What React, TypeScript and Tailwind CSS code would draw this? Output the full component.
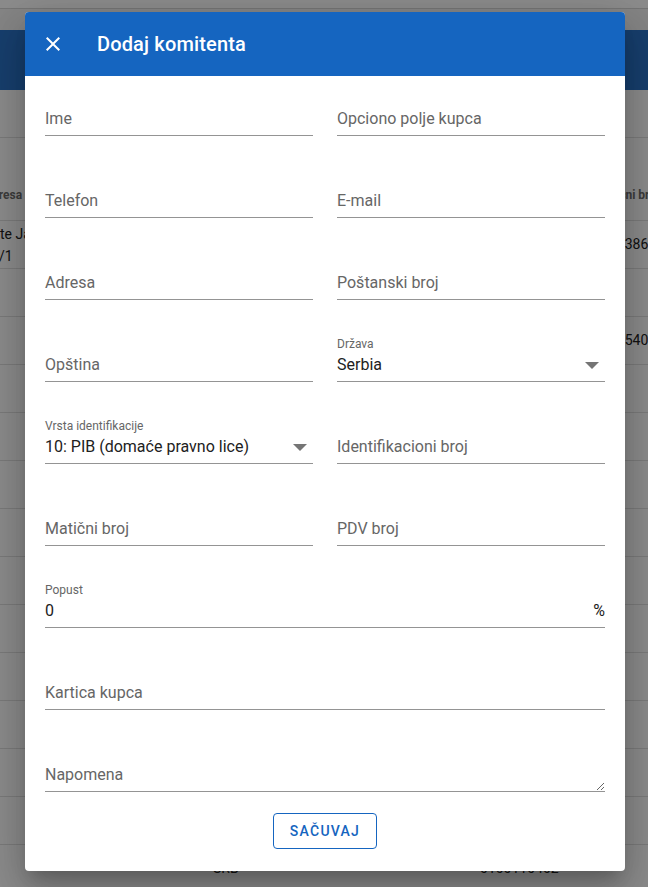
import React from "react";

type FieldProps = {
  label: string;
  value?: string;
  full?: boolean;
  select?: boolean;
  suffix?: string;
  textarea?: boolean;
};

function ArrowDrop() {
  return (
    <svg viewBox="0 0 14 7" className="w-[14px] h-[7px] shrink-0 self-start mt-[10px] mr-[6px] fill-[#757575]">
      <path d="M0 0h14L7 7z" />
    </svg>
  );
}

function Field({ label, value, full, select, suffix, textarea }: FieldProps) {
  const hasValue = value !== undefined;
  return (
    <div className={`flex flex-col h-[48px] ${full ? "col-span-2" : ""}`}>
      <div className="h-[18px] pt-[2px] text-[12px] leading-[16px] text-[#666] whitespace-nowrap">
        {hasValue ? label : ""}
      </div>
      <div className="h-[30px] flex border-b border-[#949494]">
        {textarea ? (
          <textarea
            rows={1}
            placeholder={label}
            className="block w-full h-[29px] p-0 pt-[1px] text-[16px] leading-[23px] text-[#212121] bg-transparent outline-none resize-y overflow-hidden placeholder:text-[#666] placeholder:opacity-100"
          />
        ) : (
          <>
            <div
              className={`flex-1 pt-[1px] text-[16px] leading-[23px] whitespace-nowrap ${
                hasValue ? "text-[#212121]" : "text-[#666]"
              }`}
            >
              {hasValue ? value : label}
            </div>
            {select && <ArrowDrop />}
            {suffix && (
              <div className="pt-[1px] text-[16px] leading-[23px] text-[#212121]">{suffix}</div>
            )}
          </>
        )}
      </div>
    </div>
  );
}

const rowCls =
  "grid grid-cols-[213px_267px_115px_53px] h-[48px] border-b border-[#e0e0e0] text-[14px] text-[#212121] whitespace-nowrap";

export default function App() {
  const emptyRows = Array.from({ length: 10 });
  return (
    <div className="relative w-[648px] h-[887px] overflow-hidden bg-white [font-family:Roboto,'Liberation_Sans',sans-serif]">
      {/* underlying page */}
      <div className="flex flex-col">
        <div className="h-[9px] bg-white border-b border-[#d6d6d6]" />
        <div className="h-[21px] bg-[#f2f2f2]" />
        <div className="h-[60px] bg-[#2a74c8]" />
        <div className="h-[47px]" />
        <div className="grid grid-cols-[213px_267px_115px_53px] h-[84px] border-t border-b border-[#e0e0e0] items-end pb-[17px] text-[12px] leading-[16px] font-bold text-[#6e6e6e] whitespace-nowrap">
          <div className="ml-[-16px]">Adresa</div>
          <div />
          <div />
          <div>Matični broj</div>
        </div>
        <div className={rowCls}>
          <div className="flex flex-col justify-center leading-[22px]">
            <span>te Jakšića 14</span>
            <span className="ml-[-1px]">/1</span>
          </div>
          <div />
          <div />
          <div className="pl-[14px] flex items-center">10386012</div>
        </div>
        <div className={rowCls} />
        <div className={rowCls}>
          <div />
          <div />
          <div />
          <div className="pl-[14px] flex items-center">08540321</div>
        </div>
        {emptyRows.map((_, i) => (
          <div key={i} className={rowCls} />
        ))}
        <div className={rowCls}>
          <div />
          <div className="flex items-center">SRB</div>
          <div className="flex items-center">0100110402</div>
          <div />
        </div>
      </div>

      {/* backdrop */}
      <div className="absolute inset-0 bg-black/45" />

      {/* dialog */}
      <div className="absolute left-[25px] top-[12px] w-[600px] h-[859px] bg-white rounded-[4px] overflow-hidden flex flex-col shadow-[0_11px_15px_-7px_rgba(0,0,0,0.2),0_24px_38px_3px_rgba(0,0,0,0.14),0_9px_46px_8px_rgba(0,0,0,0.12)]">
        <div className="h-16 shrink-0 bg-[#1565c0] flex items-center pl-4 text-white">
          <svg viewBox="0 0 24 24" className="w-6 h-6 fill-white">
            <path d="M19 6.41 17.59 5 12 10.59 6.41 5 5 6.41 10.59 12 5 17.59 6.41 19 12 13.41 17.59 19 19 17.59 13.41 12z" />
          </svg>
          <div className="ml-8 text-[20px] leading-[32px] font-medium tracking-[0.15px]">Dodaj komitenta</div>
        </div>
        <div className="flex flex-col px-5 pt-3">
          <div className="grid grid-cols-2 gap-x-6 gap-y-[34px]">
            <Field label="Ime" />
            <Field label="Opciono polje kupca" />
            <Field label="Telefon" />
            <Field label="E-mail" />
            <Field label="Adresa" />
            <Field label="Poštanski broj" />
            <Field label="Opština" />
            <Field label="Država" value="Serbia" select />
            <Field label="Vrsta identifikacije" value="10: PIB (domaće pravno lice)" select />
            <Field label="Identifikacioni broj" />
            <Field label="Matični broj" />
            <Field label="PDV broj" />
            <Field label="Popust" value="0" suffix="%" full />
            <Field label="Kartica kupca" full />
            <Field label="Napomena" textarea full />
          </div>
          <div className="flex justify-center mt-[21px]">
            <button className="h-[36px] px-[16px] border border-[#1565c0] rounded-[4px] text-[#1565c0] text-[14px] font-medium tracking-[1.25px] uppercase">
              Sačuvaj
            </button>
          </div>
        </div>
      </div>
    </div>
  );
}
